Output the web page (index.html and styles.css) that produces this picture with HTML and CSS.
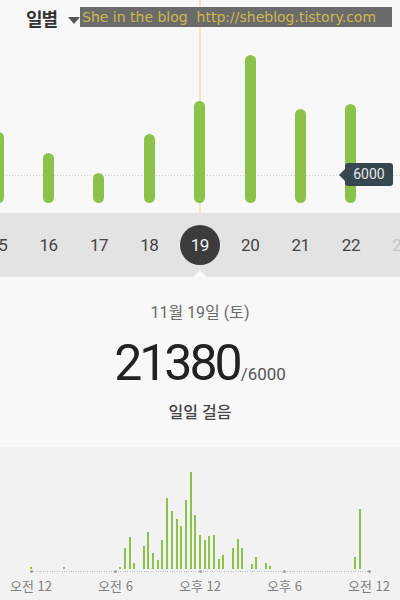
FILE: index.html
```html
<!DOCTYPE html>
<html lang="ko">
<head>
  <meta charset="UTF-8" />
  <meta name="viewport" content="width=device-width, initial-scale=1.0"/>
  <title>걸음 수</title>
  <link rel="stylesheet" href="styles.css">
</head>
<body>
<div class="screen">

  <!-- daily chart -->
  <header class="top">
    <div class="period">일별<span class="caret"></span></div>
    <div class="watermark">She in the blog&nbsp; http://sheblog.tistory.com</div>
    <div class="cursor-line"></div>
    <div class="goal-line"></div>
    <div class="goal-tip">6000</div>
    <div class="bars" id="dayBars"></div>
  </header>

  <!-- day picker -->
  <nav class="days" id="days"></nav>

  <!-- selected day -->
  <section class="summary">
    <p class="date">11월 19일 (토)</p>
    <p class="total"><span class="count">21380</span><span class="goal">/6000</span></p>
    <p class="label">일일 걸음</p>
  </section>

  <!-- hourly chart -->
  <section class="hourly">
    <div class="hour-bars" id="hourBars"></div>
    <div class="baseline"></div>
    <div class="axis">
      <div class="tick"><i></i><span>오전 12</span></div>
      <div class="tick"><i></i><span>오전 6</span></div>
      <div class="tick"><i></i><span>오후 12</span></div>
      <div class="tick"><i></i><span>오후 6</span></div>
      <div class="tick"><i></i><span>오전 12</span></div>
    </div>
  </section>

</div>

<script>
  // Daily steps (bar height in px)
  const days = [
    { day: 15, h: 71 },
    { day: 16, h: 50 },
    { day: 17, h: 30 },
    { day: 18, h: 69 },
    { day: 19, h: 102, on: true },
    { day: 20, h: 148 },
    { day: 21, h: 94 },
    { day: 22, h: 99 },
    { day: 23, h: 0, future: true }
  ];

  const dayBars = document.getElementById("dayBars");
  const dayList = document.getElementById("days");

  days.forEach(d => {
    const col = document.createElement("div");
    col.className = "col";
    if (d.h) {
      const bar = document.createElement("div");
      bar.className = "bar";
      bar.style.height = d.h + "px";
      col.appendChild(bar);
    }
    dayBars.appendChild(col);

    const item = document.createElement("div");
    item.className = "day" + (d.on ? " on" : "") + (d.future ? " future" : "");
    item.innerHTML = `<span>${d.day}</span>`;
    dayList.appendChild(item);
  });

  // Steps per 20 minutes, slot index -> height
  const hourly = {
    0: 2, 7: 2, 19: 2, 20: 21, 21: 32, 22: 6, 24: 23, 25: 37, 26: 16,
    27: 9, 28: 29, 29: 71, 30: 58, 31: 50, 32: 43, 33: 69, 34: 97,
    35: 54, 36: 34, 37: 29, 38: 33, 39: 34, 40: 10, 41: 14, 43: 21,
    44: 30, 45: 21, 47: 5, 48: 12, 50: 6, 51: 3, 69: 12, 70: 60
  };

  const hourBars = document.getElementById("hourBars");
  for (let i = 0; i < 72; i++) {
    const slot = document.createElement("div");
    slot.className = "slot";
    if (hourly[i]) {
      const bar = document.createElement("div");
      bar.className = "hbar";
      bar.style.height = hourly[i] + "px";
      slot.appendChild(bar);
    }
    hourBars.appendChild(slot);
  }
</script>
</body>
</html>
```

FILE: styles.css
```css
body {
  margin: 0;
  padding: 0;
  font-family: Roboto, "Noto Sans CJK KR", sans-serif;
  background: #f8f8f8;
}
p {
  margin: 0;
}
.screen {
  width: 400px;
  height: 600px;
  overflow: hidden;
}

/* daily chart */
.top {
  position: relative;
  height: 213px;
  display: flex;
  flex-direction: column;
  background: #f8f8f8;
}
.period {
  height: 37px;
  line-height: 37px;
  padding-left: 26px;
  font-family: "Noto Sans CJK KR", sans-serif;
  font-size: 18px;
  font-weight: bold;
  letter-spacing: -1px;
  color: #333;
}
.caret {
  display: inline-block;
  margin-left: 11px;
  vertical-align: 2px;
  border-left: 6px solid transparent;
  border-right: 6px solid transparent;
  border-top: 7px solid #555;
}
.watermark {
  position: absolute;
  top: 7px;
  left: 80px;
  width: 312px;
  height: 20px;
  padding-left: 2px;
  box-sizing: border-box;
  background: #6b6b6b;
  color: #cdb84c;
  font-family: "DejaVu Sans", sans-serif;
  font-size: 14px;
  line-height: 20px;
  white-space: nowrap;
  z-index: 3;
}
.cursor-line {
  position: absolute;
  top: 0;
  left: 199px;
  width: 2px;
  height: 213px;
  background: #f7e3bb;
}
.goal-line {
  position: absolute;
  top: 175px;
  left: 0;
  right: 0;
  height: 1px;
  background: repeating-linear-gradient(to right, #cfcfcf 0 1px, transparent 1px 3px);
}
.goal-tip {
  position: absolute;
  top: 163px;
  left: 345px;
  width: 48px;
  height: 23px;
  line-height: 23px;
  border-radius: 3px;
  background: #37474f;
  color: #e8e8e8;
  font-size: 14px;
  text-align: center;
  z-index: 2;
}
.goal-tip::before {
  content: "";
  position: absolute;
  left: -6px;
  top: 6px;
  border-top: 6px solid transparent;
  border-bottom: 6px solid transparent;
  border-right: 6px solid #37474f;
}
.bars {
  position: relative;
  z-index: 1;
  flex: 1;
  display: flex;
  align-items: flex-end;
  margin-left: -27px;
  padding-bottom: 10px;
}
.col {
  flex: none;
  width: 50.4px;
  display: flex;
  justify-content: center;
}
.bar {
  width: 11px;
  border-radius: 6px;
  background: #8bc34a;
}

/* day picker */
.days {
  display: flex;
  height: 64px;
  margin-left: -27px;
  background: #e3e3e3;
}
.day {
  position: relative;
  flex: none;
  width: 50.4px;
  display: flex;
  align-items: center;
  justify-content: center;
  font-size: 17px;
  letter-spacing: -0.5px;
  color: #444;
}
.day span {
  width: 40px;
  height: 40px;
  line-height: 40px;
  text-align: center;
  border-radius: 50%;
}
.day.on span {
  background: #3c3c3c;
  color: #f2f2f2;
}
.day.on::after {
  content: "";
  position: absolute;
  bottom: 0;
  left: 50%;
  margin-left: -7px;
  border-left: 7px solid transparent;
  border-right: 7px solid transparent;
  border-bottom: 7px solid #f8f8f8;
}
.day.future {
  color: #c4c4c4;
}

/* selected day */
.summary {
  height: 170px;
  box-sizing: border-box;
  padding-top: 26px;
  text-align: center;
  background: #f8f8f8;
}
.date {
  font-size: 16px;
  line-height: 20px;
  color: #6a6a6a;
}
.total {
  margin-top: 15px;
  line-height: 50px;
  color: #222;
}
.count {
  font-size: 50px;
  letter-spacing: -3px;
}
.goal {
  margin-left: 1px;
  font-size: 17px;
  line-height: 1;
  color: #555;
}
.label {
  margin-top: 3px;
  font-size: 16px;
  line-height: 20px;
  font-weight: 500;
  color: #444;
}

/* hourly chart */
.hourly {
  height: 153px;
  background: #f2f2f2;
  padding-top: 22px;
  box-sizing: border-box;
}
.hour-bars {
  display: grid;
  grid-template-columns: repeat(72, 1fr);
  width: 338px;
  height: 100px;
  margin-left: 28.65px;
}
.slot {
  display: flex;
  align-items: flex-end;
  justify-content: center;
}
.hbar {
  width: 2px;
  background: #8bc34a;
}
.baseline {
  width: 338px;
  height: 1px;
  margin: 2px 0 0 31px;
  background: repeating-linear-gradient(to right, #bdbdbd 0 1px, transparent 1px 2.35px);
}
.axis {
  display: flex;
  margin: -2px 0 0 -11.25px;
}
.tick {
  flex: none;
  width: 84.5px;
  display: flex;
  flex-direction: column;
  align-items: center;
}
.tick i {
  width: 3px;
  height: 3px;
  border-radius: 50%;
  background: #9e9e9e;
}
.tick span {
  margin-top: 5px;
  font-family: "Noto Sans CJK KR", sans-serif;
  font-size: 13px;
  line-height: 16px;
  color: #808080;
}
```
